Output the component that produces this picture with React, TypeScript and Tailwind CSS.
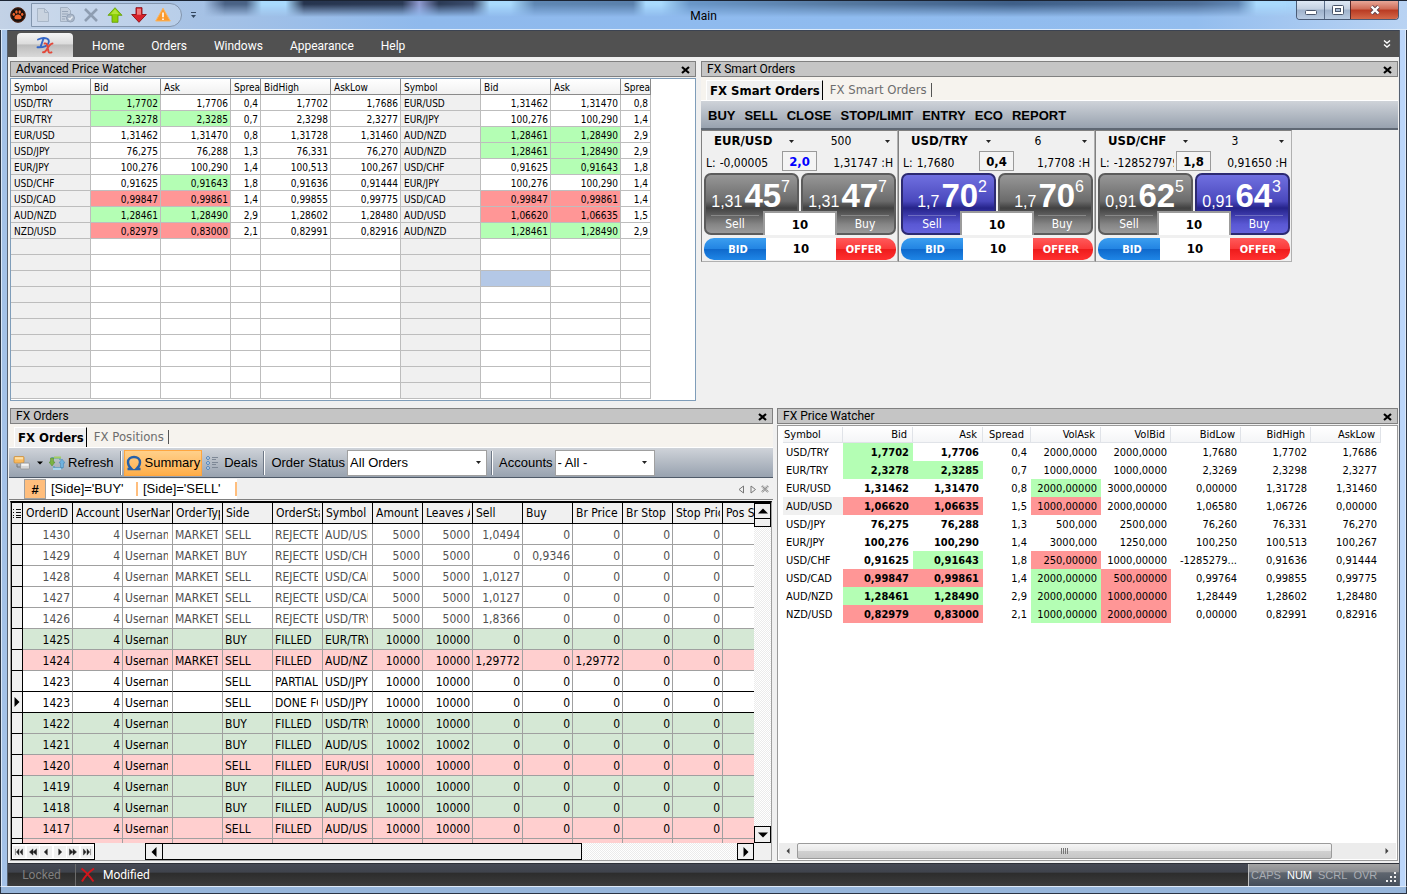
import React from "react";

type Mark = "g" | "r" | "s" | "";

const MARK: Record<Mark, string> = {
  g: "bg-[#b4feb4]",
  r: "bg-[#ff9696]",
  s: "bg-[#b4c8e6]",
  "": "",
};

/* ---------- data ---------- */

const ADV_WIDTHS = ["w-20", "w-[70px]", "w-[70px]", "w-[30px]", "w-[70px]", "w-[70px]", "w-20", "w-[70px]", "w-[70px]", "w-[30px]"];
const ADV_HEAD = ["Symbol", "Bid", "Ask", "Sprea", "BidHigh", "AskLow", "Symbol", "Bid", "Ask", "Sprea"];
const ADV_ROWS: string[][] = [
  ["USD/TRY", "1,7702", "1,7706", "0,4", "1,7702", "1,7686", "EUR/USD", "1,31462", "1,31470", "0,8"],
  ["EUR/TRY", "2,3278", "2,3285", "0,7", "2,3298", "2,3277", "EUR/JPY", "100,276", "100,290", "1,4"],
  ["EUR/USD", "1,31462", "1,31470", "0,8", "1,31728", "1,31460", "AUD/NZD", "1,28461", "1,28490", "2,9"],
  ["USD/JPY", "76,275", "76,288", "1,3", "76,331", "76,270", "AUD/NZD", "1,28461", "1,28490", "2,9"],
  ["EUR/JPY", "100,276", "100,290", "1,4", "100,513", "100,267", "USD/CHF", "0,91625", "0,91643", "1,8"],
  ["USD/CHF", "0,91625", "0,91643", "1,8", "0,91636", "0,91444", "EUR/JPY", "100,276", "100,290", "1,4"],
  ["USD/CAD", "0,99847", "0,99861", "1,4", "0,99855", "0,99775", "USD/CAD", "0,99847", "0,99861", "1,4"],
  ["AUD/NZD", "1,28461", "1,28490", "2,9", "1,28602", "1,28480", "AUD/USD", "1,06620", "1,06635", "1,5"],
  ["NZD/USD", "0,82979", "0,83000", "2,1", "0,82991", "0,82916", "AUD/NZD", "1,28461", "1,28490", "2,9"],
];
const ADV_MARKS: Record<string, Mark> = {
  "0-1": "g", "1-1": "g", "1-2": "g", "5-2": "g", "6-1": "r", "6-2": "r", "7-1": "g", "7-2": "g", "8-1": "r", "8-2": "r",
  "2-7": "g", "2-8": "g", "3-7": "g", "3-8": "g", "4-8": "g", "6-7": "r", "6-8": "r", "7-7": "r", "7-8": "r", "8-7": "g", "8-8": "g",
  "11-7": "s",
};

const PW_WIDTHS = ["w-[60px]", "w-[70px]", "w-[70px]", "w-12", "w-[70px]", "w-[70px]", "w-[70px]", "w-[70px]", "w-[70px]"];
const PW_HEAD = ["Symbol", "Bid", "Ask", "Spread", "VolAsk", "VolBid", "BidLow", "BidHigh", "AskLow"];
const PW_ROWS: string[][] = [
  ["USD/TRY", "1,7702", "1,7706", "0,4", "2000,0000", "2000,0000", "1,7680", "1,7702", "1,7686"],
  ["EUR/TRY", "2,3278", "2,3285", "0,7", "1000,0000", "1000,0000", "2,3269", "2,3298", "2,3277"],
  ["EUR/USD", "1,31462", "1,31470", "0,8", "2000,00000", "3000,00000", "0,00000", "1,31728", "1,31460"],
  ["AUD/USD", "1,06620", "1,06635", "1,5", "1000,00000", "2000,00000", "1,06580", "1,06726", "0,00000"],
  ["USD/JPY", "76,275", "76,288", "1,3", "500,000", "2500,000", "76,260", "76,331", "76,270"],
  ["EUR/JPY", "100,276", "100,290", "1,4", "3000,000", "1250,000", "100,250", "100,513", "100,267"],
  ["USD/CHF", "0,91625", "0,91643", "1,8", "250,00000", "1000,00000", "-1285279...", "0,91636", "0,91444"],
  ["USD/CAD", "0,99847", "0,99861", "1,4", "2000,00000", "500,00000", "0,99764", "0,99855", "0,99775"],
  ["AUD/NZD", "1,28461", "1,28490", "2,9", "2000,00000", "1000,00000", "1,28449", "1,28602", "1,28480"],
  ["NZD/USD", "0,82979", "0,83000", "2,1", "1000,00000", "2000,00000", "0,00000", "0,82991", "0,82916"],
];
const PW_MARKS: Record<string, Mark> = {
  "0-1": "g", "1-1": "g", "1-2": "g", "2-4": "g", "3-1": "r", "3-2": "r", "3-4": "r", "6-2": "g", "6-4": "r",
  "7-1": "r", "7-2": "r", "7-4": "g", "7-5": "r", "8-1": "g", "8-2": "g", "8-4": "g", "8-5": "r",
  "9-1": "r", "9-2": "r", "9-4": "g", "9-5": "r",
};

const ORD_HEAD = ["OrderID", "Account", "UserName", "OrderType", "Side", "OrderStatus", "Symbol", "Amount", "Leaves Amount", "Sell", "Buy", "Br Price", "Br Stop", "Stop Price", "Pos Size"];
const ORD_RIGHT = [0, 1, 7, 8, 9, 10, 11, 12, 13];
type Order = [id: string, type: string, side: string, status: string, symbol: string, amount: string, sell: string, buy: string, br: string];
const ORD_ROWS: Order[] = [
  ["1430", "MARKET", "SELL", "REJECTED", "AUD/USD", "5000", "1,0494", "0", "0"],
  ["1429", "MARKET", "BUY", "REJECTED", "USD/CHF", "5000", "0", "0,9346", "0"],
  ["1428", "MARKET", "SELL", "REJECTED", "USD/CAD", "5000", "1,0127", "0", "0"],
  ["1427", "MARKET", "SELL", "REJECTED", "USD/CAD", "5000", "1,0127", "0", "0"],
  ["1426", "MARKET", "SELL", "REJECTED", "USD/TRY", "5000", "1,8366", "0", "0"],
  ["1425", "", "BUY", "FILLED", "EUR/TRY", "10000", "0", "0", "0"],
  ["1424", "MARKET", "SELL", "FILLED", "AUD/NZD", "10000", "1,29772", "0", "1,29772"],
  ["1423", "", "SELL", "PARTIAL", "USD/JPY", "10000", "0", "0", "0"],
  ["1423", "", "SELL", "DONE FOR", "USD/JPY", "10000", "0", "0", "0"],
  ["1422", "", "BUY", "FILLED", "USD/TRY", "10000", "0", "0", "0"],
  ["1421", "", "BUY", "FILLED", "AUD/USD", "10002", "0", "0", "0"],
  ["1420", "", "SELL", "FILLED", "EUR/USD", "10000", "0", "0", "0"],
  ["1419", "", "BUY", "FILLED", "AUD/USD", "10000", "0", "0", "0"],
  ["1418", "", "BUY", "FILLED", "AUD/USD", "10000", "0", "0", "0"],
  ["1417", "", "SELL", "FILLED", "AUD/USD", "10000", "0", "0", "0"],
  ["", "", "SELL", "FILLED", "", "", "", "", ""],
];
const CURRENT_ROW = 8;

/* ---------- small parts ---------- */

function Triangle({ dir, className }: { dir: "up" | "down" | "left" | "right"; className?: string }) {
  const d = { up: "M0 6 4 2l4 4z", down: "M0 2l4 4 4-4z", left: "M6 0 2 4l4 4z", right: "M2 0l4 4-4 4z" }[dir];
  return (
    <svg viewBox="0 0 8 8" className={className ?? "size-2"} fill="currentColor" aria-hidden="true">
      <path d={d} />
    </svg>
  );
}

function PanelHeader({ title }: { title: string }) {
  return (
    <header className="flex h-4 shrink-0 items-center justify-between border border-[#808080] bg-[#c5c5c5] pr-1 pl-[5px]">
      <h2 className="font-['Roboto',sans-serif] text-[12px] leading-[14px] whitespace-nowrap">{title}</h2>
      <button type="button" aria-label={`Close ${title}`} className="flex size-3 items-center justify-center">
        <svg viewBox="0 0 9 8" className="mt-0.5 h-2 w-[9px]" aria-hidden="true">
          <path d="M1 1l7 6M8 1L1 7" stroke="#000" strokeWidth="2.2" />
        </svg>
      </button>
    </header>
  );
}

function Tabs({ active, other }: { active: string; other: string }) {
  return (
    <div role="tablist" className="flex h-6 shrink-0 items-stretch border-b border-white bg-[#f6f3ee] pt-[3px] pl-[5px] text-[13px]">
      <button type="button" role="tab" aria-selected="true" className="border-t border-l border-r border-t-white border-l-white border-r-black bg-[#f0f0f0] pr-0.5 pl-[3px] font-bold whitespace-nowrap">
        {active}
      </button>
      <button type="button" role="tab" aria-selected="false" className="flex items-center gap-1 pl-[7px] whitespace-nowrap text-[#6d6d6d]">
        {other}
        <span className="h-3.5 w-px bg-[#555]" />
      </button>
    </div>
  );
}

function Select({ label, options, box, className, arrow }: { label: string; options: string[]; box: string; className: string; arrow: string }) {
  return (
    <span className={`relative block ${box}`}>
      <select aria-label={label} className={`block h-full w-full appearance-none outline-none ${className}`}>
        {options.map((o) => (
          <option key={o}>{o}</option>
        ))}
      </select>
      <span className={`pointer-events-none absolute top-0 flex h-full items-center ${arrow}`}>
        <svg viewBox="0 0 5 3" className="h-[3px] w-[5px]" aria-hidden="true">
          <path d="M0 0h5L2.5 3z" fill="#222" />
        </svg>
      </span>
    </span>
  );
}

/* ---------- title bar ---------- */

function TitleBar() {
  return (
    <header className="relative grid h-[30px] shrink-0 grid-cols-[1fr_auto_1fr] items-center border-t border-b border-t-[#1b2433] border-b-[#dceaf9] bg-[linear-gradient(90deg,#c3d2e6_0%,#a9c3e4_12%,#8fb9ec_30%,#8fbbef_60%,#93bdee_85%,#b9d3f3_100%)] px-2">
      <span
        aria-hidden="true"
        className="absolute inset-x-0 top-0 h-4 bg-[linear-gradient(90deg,transparent_14.5%,#4a6285_16%,#4a6285_17.5%,#a9dafd_18.6%,#a9dafd_20.3%,#26344e_21.6%,#2b3a55_28.6%,#8f9ad0_29.8%,#2b3a55_31.2%,#3a4c6c_33.6%,#a9dafd_34.8%,#a9dafd_36.3%,#5f87b3_38%,#5a80ab_45%,#a9dafd_45.9%,#a9dafd_47%,#6a97c8_49%,#55789f_60%,#3f5f88_72%,#4f6f98_85%,#5f86b3_88%,#a9dafd_89.3%,#a9dafd_91%,transparent_96%)] [mask-image:linear-gradient(#000_20%,transparent)]"
      />
      <div className="relative flex items-center">
        <svg viewBox="0 0 16 16" className="ml-0.5 size-4" aria-hidden="true">
          <circle cx="8" cy="8" r="7.5" fill="#15100e" />
          <g fill="#f0642c">
            <path d="M8 7.6c-2 0-3.6 1.8-3.6 3.2 0 1.300 1.200 1.500 3.600 1.500s3.600-.2 3.600-1.500c0-1.400-1.600-3.200-3.600-3.200z" />
            <ellipse cx="3.800" cy="7.300" rx="1.200" ry="1.600" />
            <ellipse cx="6.400" cy="5" rx="1.200" ry="1.700" />
            <ellipse cx="9.700" cy="5" rx="1.200" ry="1.700" />
            <ellipse cx="12.200" cy="7.300" rx="1.200" ry="1.600" />
          </g>
          <circle cx="8" cy="8" r="7.300" fill="none" stroke="#5a2a18" />
        </svg>

        <div className="ml-[5px] flex h-6 items-center gap-2 rounded-r-full border border-[#8295ad] bg-white/20 pr-2.5 pl-[3px]">
          <button type="button" aria-label="New" className="size-4">
            <svg viewBox="0 0 16 16" aria-hidden="true">
              <path d="M2.500 1.500h7l4 4v9h-11z" fill="#c9d3df" stroke="#a9b7c8" />
              <path d="M9.500 1.500v4h4" fill="none" stroke="#a9b7c8" />
            </svg>
          </button>
          <button type="button" aria-label="Edit list" className="size-4">
            <svg viewBox="0 0 16 16" aria-hidden="true">
              <path d="M1.500.5h7l3 3v11h-10z" fill="#c3cedc" stroke="#a3b1c3" />
              <path d="M3 4.500h6M3 7h6M3 9.500h4M3 12h3" stroke="#98a6b9" />
              <circle cx="11.500" cy="11" r="4" fill="#aab7c8" stroke="#93a2b7" />
              <path d="M9.500 11l1.500 1.500 2.500-3" fill="none" stroke="#e8edf4" strokeWidth="1.300" />
            </svg>
          </button>
          <button type="button" aria-label="Delete" className="size-4">
            <svg viewBox="0 0 16 16" aria-hidden="true">
              <path d="M2 2l12 12M14 2L2 14" stroke="#8e9db1" strokeWidth="2.600" />
            </svg>
          </button>
          <button type="button" aria-label="Buy up" className="size-4">
            <svg viewBox="0 0 16 16" aria-hidden="true">
              <path d="M8 .7L15 8.300h-4V15.300H5V8.300H1z" fill="#8fd00a" stroke="#5f9a00" strokeWidth=".8" />
              <path d="M8 2.200l4 4.800H4z" fill="#b4e43a" />
            </svg>
          </button>
          <button type="button" aria-label="Sell down" className="size-4">
            <svg viewBox="0 0 16 16" aria-hidden="true">
              <path d="M8 15.300L15.300 7.500H11V.7H5v6.800H.7z" fill="#d8222a" stroke="#8c0d14" strokeWidth=".9" />
              <path d="M6 1.700h4v6H6z" fill="#f07a7a" />
            </svg>
          </button>
          <button type="button" aria-label="Alerts" className="size-4">
            <svg viewBox="0 0 16 16" aria-hidden="true">
              <path d="M8 1.200L15.300 14H.7z" fill="#fb9a2c" stroke="#fbb55e" strokeLinejoin="round" />
              <path d="M7.200 5.500h1.600v4.800H7.200zM7.200 11.400h1.600V13H7.200z" fill="#fff" />
            </svg>
          </button>
        </div>
        <button type="button" aria-label="Customize toolbar" className="ml-2 flex h-4 w-2 items-center">
          <svg viewBox="0 0 7 7" className="size-[7px]" aria-hidden="true">
            <path d="M1 .5h5" stroke="#33475f" />
            <path d="M1 3h5L3.500 6z" fill="#33475f" />
          </svg>
        </button>
      </div>

      <h1 className="relative pt-0.5 font-['Roboto',sans-serif] text-[12px] leading-4">Main</h1>

      <div className="relative flex h-[19px] self-start justify-self-end overflow-hidden rounded-b-[4px] border border-t-0 border-[#4a5b75]">
        <button type="button" aria-label="Minimize" className="flex w-7 items-center justify-center border-r border-[#5b6d88] bg-[linear-gradient(#dfe9f5_0%,#c3d0e1_45%,#9fb2cb_50%,#b9cbe2_100%)]">
          <svg viewBox="0 0 12 5" className="mt-1 h-[5px] w-3" aria-hidden="true">
            <rect x=".5" y=".5" width="11" height="4" rx="1" fill="#fff" stroke="#4a566b" />
          </svg>
        </button>
        <button type="button" aria-label="Restore" className="flex w-[26px] items-center justify-center border-r border-[#5b2a2a] bg-[linear-gradient(#dfe9f5_0%,#c3d0e1_45%,#9fb2cb_50%,#b9cbe2_100%)]">
          <svg viewBox="0 0 12 10" className="h-2.5 w-3" aria-hidden="true">
            <rect x=".5" y=".5" width="11" height="9" rx="1" fill="#fff" stroke="#4a566b" />
            <rect x="3.500" y="3.500" width="5" height="3" fill="#a8bbd4" stroke="#4a566b" />
          </svg>
        </button>
        <button type="button" aria-label="Close window" className="flex w-[47px] items-center justify-center bg-[linear-gradient(#e8a798_0%,#cf6a55_45%,#b93a22_50%,#d4694a_100%)]">
          <svg viewBox="0 0 12 10" className="h-2.5 w-3" aria-hidden="true">
            <path d="M2.500 1.500l7 7M9.500 1.500l-7 7" stroke="#5b4450" strokeWidth="4" />
            <path d="M2.500 1.500l7 7M9.500 1.500l-7 7" stroke="#fff" strokeWidth="2.400" />
          </svg>
        </button>
      </div>
    </header>
  );
}

function Ribbon() {
  return (
    <nav className="flex h-[27px] shrink-0 items-end justify-between border-t border-[#3b4352] bg-[#515151] pr-2 pl-[9px]">
      <div className="flex h-6 items-center">
        <button type="button" aria-label="Application menu" className="flex h-6 w-14 items-center justify-center rounded-t-[4px] bg-[linear-gradient(#f4f4f4_0%,#dcdcdc_45%,#bcbcbc_50%,#d9d9d9_100%)]">
          <svg viewBox="0 0 18 18" className="size-[18px]" fill="none" aria-hidden="true">
            <path d="M2 3.500C8 .8 14.500 2 12.500 7 11.500 10 7 11.500 1.500 11.300M7.500 2.500L4.500 11" stroke="#3366c8" strokeWidth="1.900" strokeLinecap="round" />
            <path d="M8.500 7.500c2-.5 2.500.5 3 3l1 5c.3 1.200 1.500 1.500 3 .8M16.500 7.500c-2.500 0-4.500 4-6 6.500-1 1.700-2 2.300-3.500 2.200" stroke="#e2493b" strokeWidth="1.900" strokeLinecap="round" />
          </svg>
        </button>
        <div className="ml-[19px] flex gap-[27px] pt-0.5 font-['Roboto',sans-serif] text-[12px] text-white">
          {["Home", "Orders", "Windows", "Appearance", "Help"].map((t) => (
            <a key={t} href={`#${t.toLowerCase()}`}>
              {t}
            </a>
          ))}
        </div>
      </div>
      <button type="button" aria-label="Expand ribbon" className="mb-[9px]">
        <svg viewBox="0 0 8 8" className="size-2" fill="none" stroke="#fff" strokeWidth="1.400" aria-hidden="true">
          <path d="M1 .5l3 2.500L7 .5M1 4.500L4 7l3-2.500" />
        </svg>
      </button>
    </nav>
  );
}

/* ---------- advanced price watcher ---------- */

function AdvancedPriceWatcher() {
  const rows = Array.from({ length: 19 }, (_, i) => ADV_ROWS[i] ?? ADV_HEAD.map(() => ""));
  return (
    <section className="flex min-w-0 flex-col gap-px pl-px">
      <PanelHeader title="Advanced Price Watcher" />
      <div className="overflow-hidden border border-[#7f9db9] bg-white pb-px">
        <table className="w-[640px] table-fixed border-separate border-spacing-0 text-[10px] leading-3">
          <thead>
            <tr className="h-4">
              {ADV_HEAD.map((h, i) => (
                <th key={i} className={`${ADV_WIDTHS[i]} h-4 overflow-hidden border-r border-b border-[#8a8a8a] bg-linear-to-b from-white to-[#f1f1f1] p-0 pt-0.5 pl-[3px] text-left font-normal whitespace-nowrap`}>
                  {h}
                </th>
              ))}
            </tr>
          </thead>
          <tbody>
            {rows.map((r, ri) => (
              <tr key={ri} className="h-4">
                {r.map((c, ci) => (
                  <td
                    key={ci}
                    className={`h-4 overflow-hidden border-r border-b border-[#bdbdbd] p-0 pt-[3px] whitespace-nowrap ${ci % 6 === 0 ? "bg-[#f0f0f0] pl-[3px]" : "pr-0.5 text-right"} ${MARK[ADV_MARKS[`${ri}-${ci}`] ?? ""]}`}
                  >
                    {c}
                  </td>
                ))}
              </tr>
            ))}
          </tbody>
        </table>
      </div>
    </section>
  );
}

/* ---------- smart orders ---------- */

const ARIAL = "font-['Liberation_Sans',sans-serif]";

function PriceButton({ side, small, big, pip, active }: { side: "Sell" | "Buy"; small: string; big: string; pip: string; active?: boolean }) {
  return (
    <button
      type="button"
      className={`flex h-[62px] min-w-0 flex-1 flex-col rounded-[7px] border-2 text-white ${
        active
          ? "border-[#2c2a72] bg-[linear-gradient(#7070e0_0%,#4a48bd_45%,#25238a_57%,#5a58d4_85%,#6462dc_100%)]"
          : "border-[#5c5c5c] bg-[linear-gradient(#979797_0%,#6b6b6b_45%,#414141_57%,#858585_85%,#9a9a9a_100%)]"
      }`}
    >
      <span className={`${ARIAL} flex h-[37px] w-full items-end justify-end pr-[7px]`}>
        <span className="text-[16px] leading-5">{small}</span>
        <span className="ml-0.5 text-[33px] leading-8 font-bold">{big}</span>
        <span className="self-start pt-0.5 text-[16px] leading-5">{pip}</span>
      </span>
      <span className={`mx-[5px] mt-[3px] w-12 border-t border-white/25 pt-px text-[12px] leading-[15px] ${side === "Buy" ? "self-end" : "self-start"}`}>{side}</span>
    </button>
  );
}

type Deal = {
  symbol: string; amount: string; low: string; spread: string; blue?: boolean; high: string;
  sell: [string, string, string]; buy: [string, string, string]; active?: "Sell" | "Buy";
};
const DEALS: Deal[] = [
  { symbol: "EUR/USD", amount: "500", low: "-0,00005", spread: "2,0", blue: true, high: "1,31747", sell: ["1,31", "45", "7"], buy: ["1,31", "47", "7"] },
  { symbol: "USD/TRY", amount: "6", low: "1,7680", spread: "0,4", high: "1,7708", sell: ["1,7", "70", "2"], buy: ["1,7", "70", "6"], active: "Sell" },
  { symbol: "USD/CHF", amount: "3", low: "-128527979", spread: "1,8", high: "0,91650", sell: ["0,91", "62", "5"], buy: ["0,91", "64", "3"], active: "Buy" },
];

function DealCard({ d }: { d: Deal }) {
  return (
    <article className="w-[197px] shrink-0 border border-t-[#808080] border-r-[#b0b0b0] border-b-[#b0b0b0] border-l-[#808080] bg-[#f0f0f0] pr-px pl-0.5">
      <div className="flex h-5">
        <Select label="Symbol" options={[d.symbol]} box="h-full w-[98px]" className="pl-2.5 text-[13px] font-bold" arrow="right-2" />
        <Select label={`${d.symbol} amount`} options={[d.amount]} box="h-full flex-1" className="pr-4 text-center text-[12px]" arrow="right-1.5" />
      </div>
      <div className="flex h-[22px] items-start text-[12px] leading-5">
        <span className="flex w-[78px] items-center gap-1 overflow-hidden pt-0.5 pl-0.5 whitespace-nowrap">
          L:<span className="w-[60px] overflow-hidden">{d.low}</span>
        </span>
        <span className={`h-5 w-[35px] border border-[#9a9a9a] bg-[#f4f4f4] text-center text-[13px] leading-[19px] font-bold ${d.blue ? "text-[#0000ff]" : ""}`}>{d.spread}</span>
        <span className="flex-1 pt-0.5 pr-[3px] text-right whitespace-nowrap">{d.high} :H</span>
      </div>
      <div className="relative flex gap-0.5">
        <PriceButton side="Sell" small={d.sell[0]} big={d.sell[1]} pip={d.sell[2]} active={d.active === "Sell"} />
        <PriceButton side="Buy" small={d.buy[0]} big={d.buy[1]} pip={d.buy[2]} active={d.active === "Buy"} />
        <input aria-label={`${d.symbol} market quantity`} defaultValue="10" className="absolute bottom-0 left-[59px] h-6 w-[74px] border-2 border-b-0 border-[#9b9b9b] bg-white text-center text-[13px] font-bold outline-none" />
      </div>
      <div className="mt-[3px] mb-px flex h-[22px] text-[11px] font-bold">
        <button type="button" className="flex-1 rounded-l-[10px] bg-[linear-gradient(#3b9ef0_0%,#2385e3_48%,#0f69cc_52%,#1f86e6_100%)] pt-0.5 pl-1.5 text-white">BID</button>
        <input aria-label={`${d.symbol} limit quantity`} defaultValue="10" className="w-[70px] bg-white text-center text-[13px] outline-none" />
        <button type="button" className="flex-1 rounded-r-[10px] bg-[linear-gradient(#ff5a5a_0%,#fb3a3a_48%,#ee1c1c_52%,#ff3030_100%)] pt-0.5 pr-1 text-white">OFFER</button>
      </div>
    </article>
  );
}

function SmartOrders() {
  return (
    <section className="flex min-w-0 flex-col">
      <PanelHeader title="FX Smart Orders" />
      <Tabs active="FX Smart Orders" other="FX Smart Orders" />
      <div className={`${ARIAL} flex h-[29px] shrink-0 items-center gap-[9px] border-b-2 border-[#5f6874] bg-linear-to-b from-[#cfd3d9] to-[#98a2af] pt-0.5 pl-[7px] text-[13px] font-bold whitespace-nowrap`}>
        {["BUY", "SELL", "CLOSE", "STOP/LIMIT", "ENTRY", "ECO", "REPORT"].map((t) => (
          <button key={t} type="button">
            {t}
          </button>
        ))}
      </div>
      <div className="flex">
        {DEALS.map((d) => (
          <DealCard key={d.symbol} d={d} />
        ))}
      </div>
    </section>
  );
}

/* ---------- orders ---------- */

function ToolDivider({ className }: { className: string }) {
  return <span className={`h-6 w-0.5 shrink-0 border-l border-[#6e7886] bg-white ${className}`} />;
}

function OrdersToolbar() {
  return (
    <div className={`${ARIAL} flex h-[30px] shrink-0 items-center border-b border-[#4f5a68] bg-linear-to-b from-[#cfd3d9] to-[#98a2af] pl-1 text-[13px] whitespace-nowrap`}>
      <button type="button" aria-label="Layout" className="flex items-center gap-1.5">
        <svg viewBox="0 0 18 16" className="h-4 w-[18px]" aria-hidden="true">
          <path d="M4 9v3h5" fill="none" stroke="#777" />
          <rect x="1" y="1.500" width="10" height="6.500" rx="1" fill="#f9b95c" stroke="#c98a33" strokeWidth=".7" />
          <rect x="2" y="2.200" width="8" height="2.200" fill="#fde0a8" />
          <rect x="7.500" y="8" width="9" height="6" rx="1" fill="#d6d6d6" stroke="#909090" strokeWidth=".7" />
          <rect x="8.500" y="8.800" width="7" height="2" fill="#f6f6f6" />
        </svg>
        <Triangle dir="down" className="size-1.5" />
      </button>
      <button type="button" className="ml-1.5 flex items-center gap-[3px]">
        <svg viewBox="0 0 16 16" className="size-4" aria-hidden="true">
          <path d="M3 6V3h8v2M13 10v3H5v-2" fill="none" stroke="#5f9fc4" strokeWidth="1.500" />
          <path d="M3 11L0 7h1.500V3h3v4H6z" fill="#7cb342" stroke="#4e8a25" strokeWidth=".5" />
          <path d="M13 4l3 4h-1.500v4.500h-3V8H10z" fill="#6fb2df" stroke="#3e80b5" strokeWidth=".5" />
          <path d="M5 1.500h7v2H5z" fill="#a3cf62" />
          <path d="M4 13h8v2H4z" fill="#a9d5ee" />
        </svg>
        Refresh
      </button>
      <ToolDivider className="mr-0.5 ml-1.5" />
      <button type="button" className="flex h-[26px] items-center gap-[3px] border border-[#ffa63f] bg-linear-to-b from-[#ffd08a] to-[#ffae48] px-px">
        <svg viewBox="0 0 16 16" className="size-4" aria-hidden="true">
          <path d="M1.500 14H5.500C2.500 11.500 2 9 2 7.200 2 4 4.500 2 8 2s6 2 6 5.200c0 1.800-.5 4.300-3.500 6.800h4" fill="none" stroke="#2760a8" strokeWidth="2.400" />
        </svg>
        Summary
      </button>
      <button type="button" className="ml-1 flex items-center gap-[5px]">
        <svg viewBox="0 0 13 14" className="h-3.5 w-[13px]" fill="none" aria-hidden="true">
          <g stroke="#3f78b5">
            <circle cx="2" cy="2" r="1.400" fill="#fff" />
            <circle cx="2" cy="7" r="1.400" fill="#fff" />
            <circle cx="2" cy="12" r="1.400" fill="#fff" />
          </g>
          <path d="M6 1.500h6M6 3.500h4M6 6.500h6M6 8.500h4M6 11.500h6" stroke="#7e8896" />
        </svg>
        Deals
      </button>
      <ToolDivider className="mx-1.5" />
      <span className="mr-0.5">Order Status</span>
      <Select label="Order Status" options={["All Orders"]} box="h-[26px] w-[140px]" className="border border-[#a0a0a0] bg-white pl-0.5" arrow="right-1.5" />
      <ToolDivider className="mx-1" />
      <span className="mx-0.5">Accounts</span>
      <Select label="Accounts" options={["- All -"]} box="h-[26px] w-[100px]" className="border border-[#a0a0a0] bg-white pl-0.5" arrow="right-2" />
    </div>
  );
}

function FilterBar() {
  return (
    <div className={`${ARIAL} flex h-[22px] shrink-0 items-stretch border-b border-[#808080] pt-px pl-[15px] text-[13px]`}>
      <button type="button" className="w-[22px] border border-[#a0a0a0] bg-[#ffbe7d] font-bold">#</button>
      <div className="flex bg-white">
        <button type="button" className="my-[3px] flex w-[92px] items-center border-r-2 border-[#ffbe7d] pl-[5px] whitespace-nowrap">[Side]='BUY'</button>
        <button type="button" className="my-[3px] flex w-[99px] items-center border-r-2 border-[#ffbe7d] pl-[5px] whitespace-nowrap">[Side]='SELL'</button>
      </div>
      <div className="ml-auto flex items-center gap-1 pr-1">
        <button type="button" aria-label="Previous filter">
          <svg viewBox="0 0 8 9" className="h-[9px] w-2" fill="none" stroke="#777" aria-hidden="true"><path d="M6.500 1v7L2 4.500z" /></svg>
        </button>
        <button type="button" aria-label="Next filter">
          <svg viewBox="0 0 8 9" className="h-[9px] w-2" fill="none" stroke="#777" aria-hidden="true"><path d="M2 1v7l4.500-3.500z" /></svg>
        </button>
        <button type="button" aria-label="Clear filter">
          <svg viewBox="0 0 8 8" className="size-2" fill="none" stroke="#888" strokeWidth="2.400" strokeDasharray="1 .6" aria-hidden="true"><path d="M1 1l6 6M7 1L1 7" /></svg>
        </button>
      </div>
    </div>
  );
}

function OrdersTable() {
  return (
    <table className="w-[761px] table-fixed border-separate border-spacing-0 text-[12px] leading-4">
      <thead>
        <tr>
          <th className="h-[21px] w-[11px] border-r border-b border-black bg-[#f0f0f0] p-0">
            <svg viewBox="0 0 8 9" className="ml-px h-[9px] w-2" stroke="#111" aria-hidden="true">
              <path d="M0 .5h1M3 .5h5M0 3.500h1M3 3.500h5M0 6.500h1M3 6.500h5M0 8.500h1M3 8.500h5" />
            </svg>
          </th>
          {ORD_HEAD.map((h) => (
            <th key={h} className="h-[21px] w-[50px] border-r border-b border-black bg-[#f0f0f0] p-0 pr-0.5 pl-[3px] text-left font-normal">
              <div className="overflow-hidden whitespace-nowrap">{h}</div>
            </th>
          ))}
        </tr>
      </thead>
      <tbody>
        {ORD_ROWS.map((o, i) => {
          const [id, type, side, status, symbol, amount, sell, buy, br] = o;
          const blank = id === "";
          const zero = blank ? "" : "0";
          const cells = blank
            ? ORD_HEAD.map(() => "")
            : [id, "4", "Username", type, side, status, symbol, amount, amount, sell, buy, br, zero, zero, ""];
          const tone = status === "FILLED" ? (side === "BUY" ? "bg-[#d5e8d5]" : "bg-[#ffcfcf]") : "bg-white";
          const line = i === CURRENT_ROW || i === CURRENT_ROW - 1 ? "border-b-black" : "border-b-[#a0a0a0]";
          return (
            <tr key={i} className={`${tone} ${status === "REJECTED" ? "text-[#505050]" : "text-black"}`}>
              <td className="h-[21px] border-r border-b border-black bg-[#f0f0f0] p-0">
                {i === CURRENT_ROW && <Triangle dir="right" className="size-2.5" />}
              </td>
              {cells.map((c, ci) => (
                <td key={ci} className={`h-[21px] border-r border-b border-r-[#a0a0a0] ${line} p-0 pt-px pl-0.5 ${ORD_RIGHT.includes(ci) ? "pr-0.5 text-right" : "pr-1"}`}>
                  <div className="overflow-hidden whitespace-nowrap">{c}</div>
                </td>
              ))}
            </tr>
          );
        })}
      </tbody>
    </table>
  );
}

const TRACK = "bg-[repeating-conic-gradient(#ffffff_0_25%,#ebebeb_0_50%)] bg-[length:2px_2px]";
const NAV_ICONS: [label: string, path: string][] = [
  ["First", "M1 1v7M5 1L2 4.500 5 8zM9 1L6 4.500 9 8z"],
  ["Page back", "M5 1L1 4.500 5 8zM9 1L5 4.500 9 8z"],
  ["Previous", "M6.500 1L3 4.500 6.500 8z"],
  ["Next", "M3.500 1L7 4.500 3.500 8z"],
  ["Page forward", "M1 1l4 3.500L1 8zM5 1l4 3.500L5 8z"],
  ["Last", "M1 1l3 3.500L1 8zM5 1l3 3.500L5 8zM9 1v7"],
];

function FxOrders() {
  return (
    <section className="flex min-h-0 min-w-0 flex-col">
      <div className="pl-px">
        <PanelHeader title="FX Orders" />
      </div>
      <Tabs active="FX Orders" other="FX Positions" />
      <OrdersToolbar />
      <FilterBar />
      <div className="mx-px mt-px flex min-h-0 flex-1 flex-col border border-t-2 border-[#a0a0a0] border-t-black">
        <div className="flex min-h-0 flex-1">
          <div className="min-w-0 flex-1 overflow-hidden border-l border-black bg-white">
            <OrdersTable />
          </div>
          <div className={`flex w-[17px] shrink-0 flex-col ${TRACK}`}>
            <button type="button" aria-label="Scroll up" className="flex h-4 items-center justify-center border border-black bg-[#f0f0f0]">
              <Triangle dir="up" className="size-2.5" />
            </button>
            <span className="h-2 border border-t-0 border-black bg-[#f0f0f0]" />
            <button type="button" aria-label="Scroll down" className="mt-auto flex h-[17px] items-center justify-center border border-black bg-[#f0f0f0]">
              <Triangle dir="down" className="size-2.5" />
            </button>
          </div>
        </div>
        <div className="flex h-[17px] shrink-0 bg-[#f0f0f0]">
          <div className="flex w-[84px] items-center justify-between border border-black bg-white px-px">
            {NAV_ICONS.map(([label, d]) => (
              <button key={label} type="button" aria-label={label} className="flex h-3 w-3 items-center justify-center bg-[#f0f0f0]">
                <svg viewBox="0 0 10 9" className="h-2 w-2.5" fill="#222" stroke="#222" strokeWidth=".5" aria-hidden="true"><path d={d} /></svg>
              </button>
            ))}
          </div>
          <span className="w-[50px]" />
          <div className={`flex min-w-0 flex-1 ${TRACK}`}>
            <button type="button" aria-label="Scroll left" className="flex w-[18px] items-center justify-center border border-black bg-[#f0f0f0]"><Triangle dir="left" className="size-2.5" /></button>
            <span className="w-[419px] border border-l-0 border-black bg-[#f0f0f0]" />
            <button type="button" aria-label="Scroll right" className="ml-auto flex w-[17px] items-center justify-center border border-black bg-[#f0f0f0]"><Triangle dir="right" className="size-2.5" /></button>
          </div>
          <span className="w-[17px]" />
        </div>
      </div>
    </section>
  );
}

/* ---------- fx price watcher ---------- */

function FxPriceWatcher() {
  return (
    <section className="flex min-h-0 min-w-0 flex-col gap-px">
      <PanelHeader title="FX Price Watcher" />
      <div className="flex min-h-0 flex-1 flex-col border border-[#9a9a9a] bg-white px-px pt-px">
        <div className="min-h-0 flex-1 overflow-hidden pl-1">
          <table className="w-[598px] table-fixed border-separate border-spacing-0 text-[11px] leading-[14px]">
            <thead>
              <tr>
                {PW_HEAD.map((h, i) => (
                  <th key={h} className={`${PW_WIDTHS[i]} h-4 border-r border-b border-[#e0e3e8] bg-linear-to-b from-white to-[#f4f5f7] p-0 pt-px font-normal ${i === 0 ? "pl-px text-left" : i === 3 ? "text-center" : "pr-[5px] text-right"}`}>
                    {h}
                  </th>
                ))}
              </tr>
            </thead>
            <tbody>
              {PW_ROWS.map((r, ri) => (
                <tr key={r[0]}>
                  {r.map((c, ci) => (
                    <td
                      key={ci}
                      className={`h-[18px] p-0 pt-px whitespace-nowrap ${ci === 0 ? "pl-[3px]" : "pr-1 text-right"} ${ci === 1 || ci === 2 ? "font-bold" : ""} ${MARK[PW_MARKS[`${ri}-${ci}`] ?? ""]} ${ci === 0 && ri === 3 ? "bg-[#f0f0f0]" : ""}`}
                    >
                      {c}
                    </td>
                  ))}
                </tr>
              ))}
            </tbody>
          </table>
        </div>
        <div className="mb-px flex h-4 shrink-0 items-stretch bg-[#ececec]">
          <button type="button" aria-label="Scroll left" className="flex w-[18px] items-center justify-center text-[#444]"><Triangle dir="left" className="size-1.5" /></button>
          <div className="flex flex-1">
            <span className="flex w-[92%] items-center justify-center gap-px rounded-[2px] border border-[#9b9b9b] bg-[linear-gradient(#f5f5f5_0%,#e8e8e8_48%,#d0d0d0_52%,#c6c6c6_100%)]">
              {[0, 1, 2, 3].map((i) => (
                <span key={i} className="h-1.5 w-px bg-[#777]" />
              ))}
            </span>
          </div>
          <button type="button" aria-label="Scroll right" className="flex w-[18px] items-center justify-center text-[#444]"><Triangle dir="right" className="size-1.5" /></button>
        </div>
      </div>
    </section>
  );
}

/* ---------- status bar ---------- */

function StatusBar() {
  return (
    <footer className="flex h-[23px] shrink-0 items-stretch border-t border-[#2d3038] bg-[linear-gradient(#464954_0%,#3f434c_38%,#2c2c2c_40%,#3c3c3c_100%)] font-['Roboto',sans-serif] text-[12px] text-white">
      <span className="flex w-[68px] items-center justify-center border-r border-[#6b6b6b] text-[#808080]">Locked</span>
      <span className="flex items-center gap-[7px] pl-1">
        <svg viewBox="0 0 16 16" className="size-4" fill="none" stroke="#d3161c" strokeWidth="2" aria-hidden="true">
          <path d="M1.500 1.500c4 3 8 7.500 12 13M14 1.500C9 5 5 9 2 14.500" />
        </svg>
        Modified
      </span>
      <div className={`${ARIAL} ml-auto flex w-[151px] shrink-0 items-center gap-1.5 border-l border-[#c0c0c0] bg-[linear-gradient(#a3a3a3_0%,#8c8e92_35%,#5f666f_40%,#454e5a_100%)] pl-0.5 text-[11px] text-[#a9adb3]`}>
        <span>CAPS</span>
        <span className="text-white">NUM</span>
        <span>SCRL</span>
        <span>OVR</span>
        <svg viewBox="0 0 10 10" className="mt-1 mr-[3px] ml-auto size-2.5 shrink-0" fill="#f0f0f0" aria-hidden="true">
          <path d="M8 0h2v2H8zM8 4h2v2H8zM4 4h2v2H4zM0 8h2v2H0zM4 8h2v2H4zM8 8h2v2H8z" />
        </svg>
      </div>
    </footer>
  );
}

export default function App() {
  return (
    <div className="flex h-screen w-full flex-col overflow-hidden bg-[#a9c6ea] font-['DejaVu_Sans_Condensed','DejaVu_Sans',sans-serif] text-black">
      <TitleBar />
      <div className="flex min-h-0 flex-1 border-x border-[#2a3444] bg-[linear-gradient(90deg,#a4c2e8,#bcd6fa)] px-[6px] shadow-[inset_1px_0_#dbe8f8,inset_-1px_0_#dbe8f8]">
        <div className="flex min-w-0 flex-1 flex-col border-x border-[#56606f] bg-[#f0f0f0]">
          <Ribbon />
          <main className="flex min-h-0 flex-1 flex-col gap-[7px] px-px pt-1 pb-0.5">
            <div className="grid shrink-0 grid-cols-[687fr_697fr] gap-[5px]">
              <AdvancedPriceWatcher />
              <SmartOrders />
            </div>
            <div className="grid min-h-0 flex-1 grid-cols-[764fr_621fr] grid-rows-[minmax(0,1fr)] gap-1">
              <FxOrders />
              <FxPriceWatcher />
            </div>
          </main>
          <StatusBar />
        </div>
      </div>
      <div className="h-2 shrink-0 border-x border-t border-b border-x-[#2a3444] border-t-[#dfeaf8] border-b-[#2a3444] bg-[#96b5da]" />
    </div>
  );
}
